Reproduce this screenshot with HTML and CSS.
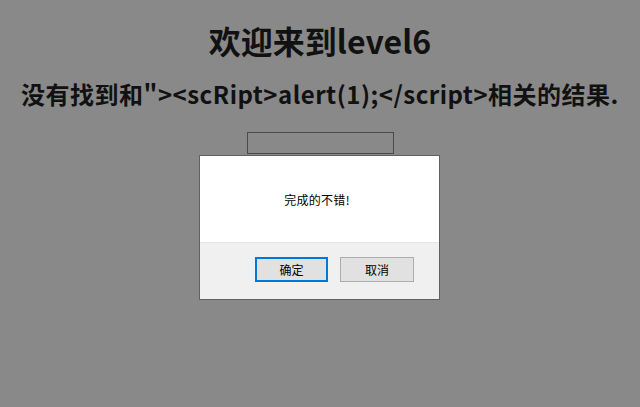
FILE: index.html
```html
<!DOCTYPE html>
<html lang="zh-CN">
<head>
<meta charset="utf-8">
<title>level6</title>
<link rel="stylesheet" href="styles.css">
</head>
<body>
<main class="page">
  <h1 class="title">欢迎来到level6</h1>
  <h2 class="result">没有找到和"&gt;&lt;scRipt&gt;alert(1);&lt;/script&gt;相关的结果.</h2>
  <div class="search"><span class="search-box"></span></div>
</main>
<div class="dialog" role="alertdialog">
  <div class="dialog-body">完成的不错!</div>
  <div class="dialog-footer">
    <button class="btn btn-primary" type="button">确定</button>
    <button class="btn" type="button">取消</button>
  </div>
</div>
</body>
</html>
```
FILE: styles.css
```css
html, body {
  margin: 0;
  padding: 0;
  background: #898989;
  width: 640px;
  height: 407px;
  overflow: hidden;
}
body {
  font-family: "Noto Sans CJK SC", "Noto Sans", sans-serif;
  color: #111111;
}
.page {
  display: flex;
  flex-direction: column;
  align-items: center;
}
.title {
  margin: 20px 0 0;
  font-size: 32px;
  line-height: 40px;
  font-weight: bold;
}
.result {
  margin: 18px 0 0;
  font-size: 24px;
  line-height: 32px;
  font-weight: bold;
  letter-spacing: 0.5px;
  white-space: nowrap;
}
.search {
  margin-top: 22px;
}
.search-box {
  display: block;
  width: 145px;
  height: 20px;
  border: 1px solid #4a4a4a;
}
.dialog {
  position: absolute;
  left: 199px;
  top: 155px;
  width: 239px;
  height: 143px;
  border: 1px solid #606060;
  background: #ffffff;
  display: flex;
  flex-direction: column;
  font-size: 12px;
  color: #000000;
}
.dialog-body {
  height: 86px;
  display: flex;
  align-items: center;
  justify-content: center;
  padding-right: 5px;
  letter-spacing: 0.3px;
}
.dialog-footer {
  flex: 1;
  background: #f0f0f0;
  border-top: 1px solid #e6e6e6;
  display: flex;
  justify-content: flex-end;
  align-items: flex-start;
  gap: 12px;
  padding: 14px 25px 0 0;
}
.btn {
  width: 74px;
  height: 25px;
  margin: 0;
  padding: 0;
  border: 1px solid #adadad;
  background: #e1e1e1;
  font-family: "Noto Sans CJK SC", sans-serif;
  font-size: 12px;
  color: #000000;
}
.btn-primary {
  width: 73px;
  border: 2px solid #0078d7;
}
```
